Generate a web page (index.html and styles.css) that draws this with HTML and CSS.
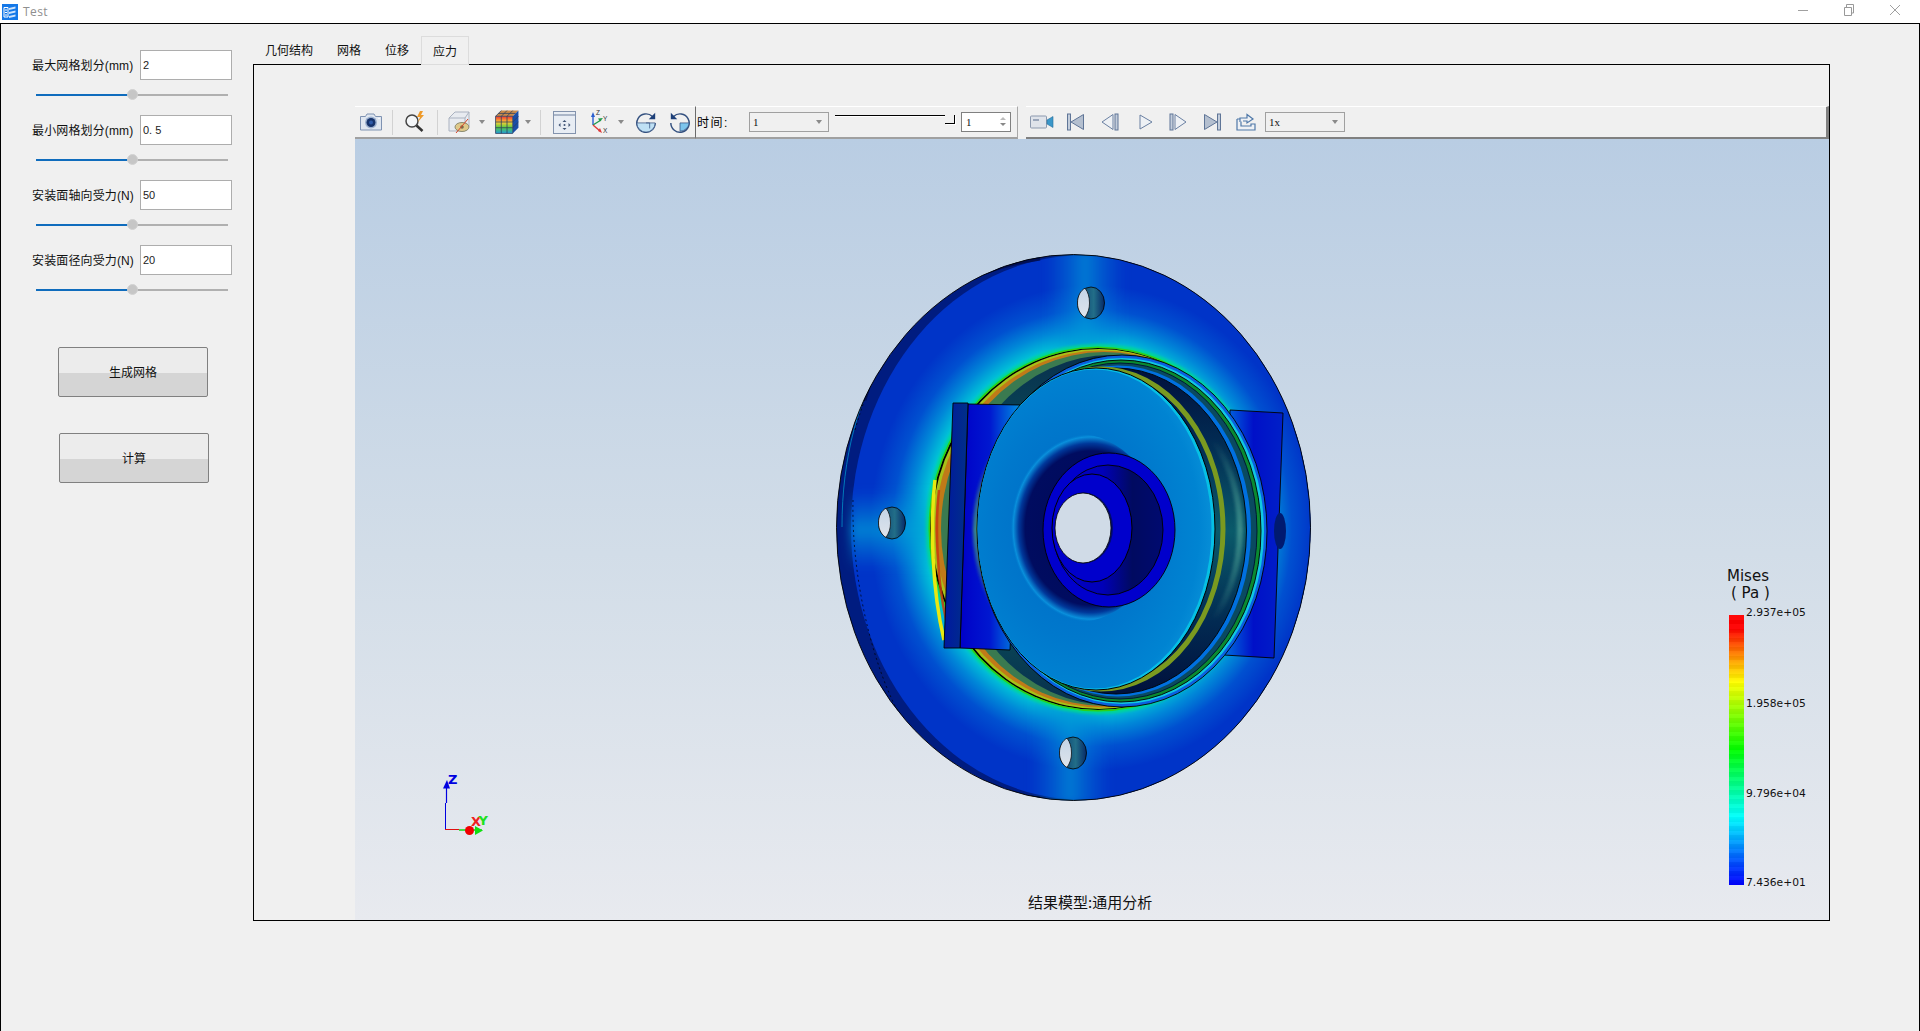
FILE: index.html
```html
<!DOCTYPE html>
<html lang="zh">
<head>
<meta charset="utf-8">
<title>Test</title>
<link rel="stylesheet" href="styles.css">
</head>
<body>
<svg width="0" height="0" class="defs">
  <defs>
    <linearGradient id="bg-hole" x1="0" y1="0" x2="0" y2="1"><stop offset="0" stop-color="#c4d4e6"/><stop offset="1" stop-color="#dfe5ec"/></linearGradient>
    <radialGradient id="disc" cx=".5" cy=".5" r=".5">
      <stop offset="0" stop-color="#00dcd4"/>
      <stop offset=".72" stop-color="#00dcd4"/>
      <stop offset=".76" stop-color="#00bcd8"/>
      <stop offset=".82" stop-color="#0088d8"/>
      <stop offset=".9" stop-color="#0050d0"/>
      <stop offset="1" stop-color="#0034c8"/>
    </radialGradient>
    <linearGradient id="spoke-v" x1="0" y1="0" x2="1" y2="0"><stop offset="0" stop-color="#0078d8" stop-opacity="0"/><stop offset=".5" stop-color="#0098d8" stop-opacity=".7"/><stop offset="1" stop-color="#0078d8" stop-opacity="0"/></linearGradient>
    <linearGradient id="spoke-h" x1="0" y1="0" x2="0" y2="1"><stop offset="0" stop-color="#0090d8" stop-opacity="0"/><stop offset=".5" stop-color="#00a0d8" stop-opacity=".7"/><stop offset="1" stop-color="#0090d8" stop-opacity="0"/></linearGradient>
    <linearGradient id="groove" x1="0" y1="0" x2="0" y2="1">
      <stop offset="0" stop-color="#08304e"/><stop offset=".25" stop-color="#0a4a58"/><stop offset=".75" stop-color="#0a4a58"/><stop offset="1" stop-color="#08304e"/>
    </linearGradient>
    <linearGradient id="groove-in" x1="0" y1="0" x2="0" y2="1">
      <stop offset="0" stop-color="#00103c"/><stop offset=".22" stop-color="#022a52"/><stop offset=".5" stop-color="#0a5a6a"/><stop offset=".78" stop-color="#022a52"/><stop offset="1" stop-color="#00103c"/>
    </linearGradient>
    <linearGradient id="mid-band" x1="0" y1="0" x2="0" y2="1">
      <stop offset=".2" stop-color="#3a8a88" stop-opacity="0"/><stop offset=".5" stop-color="#3a8a88"/><stop offset=".8" stop-color="#3a8a88" stop-opacity="0"/>
    </linearGradient>
    <radialGradient id="dish" cx=".42" cy=".5" r=".62">
      <stop offset="0" stop-color="#0068c4"/><stop offset=".55" stop-color="#0078cc"/><stop offset=".85" stop-color="#0084d2"/><stop offset="1" stop-color="#0a94da"/>
    </radialGradient>
    <radialGradient id="cup" cx=".58" cy=".5" r=".5">
      <stop offset="0" stop-color="#000858"/><stop offset=".82" stop-color="#000c60"/><stop offset=".9" stop-color="#00389a"/><stop offset=".97" stop-color="#0a90dc"/><stop offset="1" stop-color="#0080d0" stop-opacity="0"/>
    </radialGradient>
    <linearGradient id="boss-in" x1="0" y1="0" x2="1" y2="0"><stop offset="0" stop-color="#0000c8"/><stop offset=".45" stop-color="#0000b8"/><stop offset=".72" stop-color="#000a60"/><stop offset="1" stop-color="#000a70"/></linearGradient>
    <linearGradient id="plate-l" x1="0" y1="0" x2="1" y2="0"><stop offset="0" stop-color="#0000c8"/><stop offset=".5" stop-color="#0018d0"/><stop offset="1" stop-color="#0090e0"/></linearGradient>
    <linearGradient id="plate-r" x1="0" y1="0" x2="1" y2="0"><stop offset="0" stop-color="#0070e0"/><stop offset=".5" stop-color="#0010c8"/><stop offset="1" stop-color="#0020c8"/></linearGradient>
    <linearGradient id="strip" x1="0" y1="0" x2="1" y2="0"><stop offset="0" stop-color="#0018a0"/><stop offset="1" stop-color="#003088"/></linearGradient>
    <linearGradient id="hole-wall" x1="0" y1="0" x2="1" y2="0"><stop offset="0" stop-color="#083a70"/><stop offset=".6" stop-color="#226e88"/><stop offset="1" stop-color="#062a68"/></linearGradient>
    <filter id="soft" x="-30%" y="-30%" width="160%" height="160%"><feGaussianBlur stdDeviation="5"/></filter>
    <filter id="soft-s" x="-30%" y="-30%" width="160%" height="160%"><feGaussianBlur stdDeviation="1.4"/></filter>
    <clipPath id="disc-clip"><ellipse cx="1073.5" cy="527.5" rx="237" ry="273"/></clipPath>
    <clipPath id="groove-clip"><ellipse cx="1098" cy="529" rx="168" ry="181"/></clipPath>
    <g id="bolt">
      <ellipse cx="14" cy="16" rx="13.5" ry="16" fill="url(#hole-wall)" stroke="#000" stroke-width=".8"/>
      <path d="M8 1.200C3.500 3.500.5 9 .5 16s3.600 12.500 7.500 14.400C11 26 12.500 21.500 12.500 16 12.500 10 11 5 8 1.200Z" fill="url(#bg-hole)" stroke="#000" stroke-width=".7"/>
    </g>
    <linearGradient id="colorcube" x1="0" y1="0" x2="0" y2="1"><stop offset="0" stop-color="#e33"/><stop offset=".35" stop-color="#fc3"/><stop offset=".65" stop-color="#5c4"/><stop offset="1" stop-color="#29d"/></linearGradient>
  </defs>
</svg>

<header class="titlebar">
  <svg class="app-icon" viewBox="0 0 16 16"><rect width="16" height="16" fill="#1478e8"/><path d="M2 3.500h4v9.500H2zM3 6h2M3 8.500h2M3 11h2" fill="none" stroke="#fff" stroke-width="1"/><path d="M7 4l6.500-1.500v2L7 6zM7 8l6.500-1.500v2L7 10zM7 12l6.500-1.500v2L7 14z" fill="#cfe4fb"/></svg>
  <span class="app-title">Test</span>
  <div class="win-controls">
    <svg class="win-btn" viewBox="0 0 12 12"><path d="M1 6.500h10" stroke="#a0a0a0" fill="none"/></svg>
    <svg class="win-btn" viewBox="0 0 12 12"><path d="M1.500 3.500h7v8h-7zM3.500 3V.5h7V9H9" stroke="#999" fill="none"/></svg>
    <svg class="win-btn" viewBox="0 0 12 12"><path d="M1 1l10 10M11 1L1 11" stroke="#a0a0a0" fill="none"/></svg>
  </div>
</header>

<div class="window">
  <aside class="side">
    <div class="field">
      <div class="field-row"><label class="field-label">最大网格划分(mm)</label><input class="field-input" value="2"></div>
      <div class="slider"><div class="slider-fill"></div><div class="slider-knob"></div></div>
    </div>
    <div class="field">
      <div class="field-row"><label class="field-label">最小网格划分(mm)</label><input class="field-input" value="0. 5"></div>
      <div class="slider"><div class="slider-fill"></div><div class="slider-knob"></div></div>
    </div>
    <div class="field">
      <div class="field-row"><label class="field-label">安装面轴向受力(N)</label><input class="field-input" value="50"></div>
      <div class="slider"><div class="slider-fill"></div><div class="slider-knob"></div></div>
    </div>
    <div class="field">
      <div class="field-row"><label class="field-label">安装面径向受力(N)</label><input class="field-input" value="20"></div>
      <div class="slider"><div class="slider-fill"></div><div class="slider-knob"></div></div>
    </div>
    <button class="action action-mesh">生成网格</button>
    <button class="action action-calc">计算</button>
  </aside>

  <main class="content">
    <nav class="tabs">
      <div class="tab">几何结构</div>
      <div class="tab">网格</div>
      <div class="tab">位移</div>
      <div class="tab tab-active">应力</div>
    </nav>
    <section class="panel">
      <div class="toolbar">
        <div class="tool-group tool-group-a">
          <svg class="ic ic-camera" viewBox="0 0 24 20"><path d="M1.500 4.500h5l1.500-2.500h7l1.500 2.500h6v13.500h-21z" fill="#dfe6f0" stroke="#7f93b2" stroke-width="1"/><circle cx="12" cy="10.500" r="6" fill="#9db1cf"/><circle cx="12" cy="10.500" r="4.500" fill="#16336b"/><circle cx="12" cy="10.500" r="2" fill="#2e5aa8"/><circle cx="20" cy="6.500" r=".8" fill="#fff"/></svg>
          <i class="sep sep-a"></i>
          <svg class="ic ic-search" viewBox="0 0 24 24"><circle cx="9" cy="11" r="6" fill="#f4f6f8" stroke="#444" stroke-width="1.500"/><path d="M13.500 15.500l6 5.500" stroke="#333" stroke-width="2.500" fill="none"/><path d="M17 1l-3 6h3l-2 5 6-7h-3l2-4z" fill="#ee9a2a"/></svg>
          <i class="sep sep-b"></i>
          <svg class="ic ic-cube" viewBox="0 0 24 24"><path d="M2 8l6-6h14v14l-4 5H2z" fill="#e8ebf0" stroke="#aab2c0"/><path d="M2 8h16v13M18 8l4-6" fill="none" stroke="#aab2c0"/><ellipse cx="15" cy="17" rx="7" ry="4.500" fill="#dfc98a" stroke="#8a8a70"/><circle cx="15" cy="17" r="1.800" fill="#776c4c"/><path d="M9 23L21 9" stroke="#d8442a" stroke-width="1"/></svg>
          <i class="caret caret-cube"></i>
          <svg class="ic ic-color" viewBox="1.500 1.500 21 21"><path d="M2 7l5-5h15l-5 5z" fill="#c98a4a"/><path d="M17 7l5-5v15l-5 5z" fill="#1a4ea8"/><rect x="2" y="7" width="15" height="15" fill="url(#colorcube)"/><path d="M2 7h15v15H2zM7 7v15M12 7v15M2 12h15M2 17h15M7 2L2 7M12 2L7 7M17 2l-5 5M22 7l-5 5M22 12l-5 5M4.500 4.500h15" fill="none" stroke="#30415e" stroke-width=".7"/></svg>
          <i class="caret caret-color"></i>
          <i class="sep sep-c"></i>
          <svg class="ic ic-fit" viewBox="0 0 23 23"><rect x=".5" y=".5" width="22" height="22" fill="#e8edf4" stroke="#8393ad"/><path d="M1 4h21" stroke="#6c7e9c"/><path d="M11.500 9l-2 2h4zM11.500 19l-2-2h4zM5.500 14l2-2v4zM17.500 14l-2-2v4z" fill="#3e5273"/><circle cx="11.500" cy="14" r="1" fill="#3e5273"/></svg>
          <svg class="ic ic-axes" viewBox="0 0 24 24"><path d="M5 15V6" stroke="#2a5ed0" stroke-width="1.400"/><path d="M5 2L3 7h4z" fill="#2a5ed0"/><path d="M5 15l8-5" stroke="#1f9a4a" stroke-width="1.400"/><path d="M15 8l-5 .5 2 3z" fill="#1f9a4a"/><path d="M5 15l7 6" stroke="#e03a3a" stroke-width="1.400"/><path d="M14 23l-2-5-2 3z" fill="#e03a3a"/><text class="axis-l" x="8" y="5">Z</text><text class="axis-l" x="15" y="11">Y</text><text class="axis-l" x="15" y="23">X</text></svg>
          <i class="caret caret-axes"></i>
          <svg class="ic ic-rot ic-rot-r" viewBox="0 0 24 24"><path d="M19 6A10 10 0 1 0 22 13" fill="none" stroke="#33507f" stroke-width="1.600"/><path d="M2 13h20A10 10 0 0 1 2 13z" fill="#bfe0f4" stroke="#33507f" stroke-width=".8"/><path d="M12 13v6M12 13h-4" fill="none" stroke="#33507f" stroke-width=".8" transform="translate(4 0)"/><path d="M22 2v7h-7z" fill="#1d3f78"/></svg>
          <svg class="ic ic-rot ic-rot-l" viewBox="0 0 24 24"><path d="M5 6A10 10 0 1 1 2 13" fill="none" stroke="#33507f" stroke-width="1.600"/><path d="M22 13H12v9A10 10 0 0 0 22 13z" fill="#7cc4ec" stroke="#33507f" stroke-width=".8"/><path d="M2 2v7h7z" fill="#1d3f78"/></svg>
        </div>
        <div class="tool-group tool-group-b">
          <span class="time-label">时间:</span>
          <div class="combo combo-time">1<i class="caret caret-in"></i></div>
          <div class="time-slider"><i class="time-line"></i><i class="time-end"></i></div>
          <div class="spin">1<span class="spin-arrows"><i class="spin-up"></i><i class="spin-down"></i></span></div>
        </div>
        <div class="tool-group tool-group-c">
          <svg class="ic ic-video" viewBox="0 0 24 14"><rect x=".5" y="1" width="16" height="12" rx="1" fill="#dfe3ea" stroke="#8c99ae"/><rect x="3" y="4" width="6" height="2" fill="#9aa6ba"/><path d="M17 5l6-3.500v11L17 9z" fill="#3b97c9" stroke="#2a6f9c" stroke-width=".6"/></svg>
          <svg class="ic ic-play ic-first" viewBox="0 0 18 18"><rect x=".5" y="1" width="3" height="16" fill="#c3cddb" stroke="#5f7597"/><path d="M16.500 1.500v15L4 9z" fill="#b4bfcf" stroke="#5f7597"/></svg>
          <svg class="ic ic-play ic-prev" viewBox="0 0 18 18"><path d="M12 1.500v15L1 9z" fill="#eef1f5" stroke="#6a80a2"/><rect x="14" y="1" width="3" height="16" fill="#c3cddb" stroke="#5f7597"/></svg>
          <svg class="ic ic-play ic-next-play" viewBox="0 0 14 16"><path d="M1 1v14l12-7z" fill="#eef1f5" stroke="#6a80a2"/></svg>
          <svg class="ic ic-play ic-next" viewBox="0 0 18 18"><rect x="1" y="1" width="3" height="16" fill="#c3cddb" stroke="#5f7597"/><path d="M6 1.500v15L17 9z" fill="#eef1f5" stroke="#6a80a2"/></svg>
          <svg class="ic ic-play ic-last" viewBox="0 0 18 18"><path d="M1.500 1.500v15L14 9z" fill="#b4bfcf" stroke="#5f7597"/><rect x="14.500" y="1" width="3" height="16" fill="#c3cddb" stroke="#5f7597"/></svg>
          <svg class="ic ic-export" viewBox="0 0 20 18"><path d="M1 6h5M1 6v11h18v-6h-4v2H5V6" fill="#eef1f5" stroke="#4f78a8" stroke-width="1.200"/><path d="M4 9V5h7V1.500L17 6l-6 4V8H7" fill="#eef1f5" stroke="#4f78a8" stroke-width="1.200"/></svg>
          <div class="combo combo-speed">1x<i class="caret caret-in"></i></div>
        </div>
      </div>

      <div class="viewport">
        <svg class="scene" viewBox="355 139 1474 781">
          <ellipse cx="1073.500" cy="527.500" rx="237" ry="273" fill="#001c80"/>
          <g clip-path="url(#disc-clip)">
            <ellipse cx="1081" cy="527.500" rx="230" ry="272" fill="#0034c8"/>
            <path d="M842 527C842 390 905 275 1040 257" fill="none" stroke="#0090c8" stroke-width=".8"/>
            <ellipse cx="1092" cy="528" rx="222" ry="243" fill="url(#disc)"/>
            <rect x="1045" y="250" width="80" height="130" fill="url(#spoke-v)" filter="url(#soft)"/>
            <rect x="1030" y="680" width="80" height="125" fill="url(#spoke-v)" filter="url(#soft)"/>
            <rect x="850" y="490" width="95" height="80" fill="url(#spoke-h)" filter="url(#soft)"/>
            <path d="M853 500C851 590 880 700 920 745" fill="none" stroke="#000" stroke-width=".7" stroke-dasharray="2 3"/>
            <path d="M855 430C875 360 900 320 940 285" fill="none" stroke="#000" stroke-width=".7" stroke-dasharray="2 3"/>
            <path d="M870 690C905 755 970 790 1040 798" fill="none" stroke="#00101c" stroke-width="2.500" opacity=".8"/>
            <path d="M864 400C880 340 930 275 1040 258" fill="none" stroke="#000e50" stroke-width="5" opacity=".9"/>
          </g>
          <!-- outer stressed ring -->
          <ellipse cx="1098" cy="529" rx="172" ry="185" fill="#00d890" filter="url(#soft-s)"/>
          <ellipse cx="1098" cy="529" rx="169.500" ry="182.500" fill="#2fd018"/>
          <g clip-path="url(#groove-clip)">
            <ellipse cx="1098" cy="529" rx="168" ry="181" fill="#000"/>
            <ellipse cx="1099" cy="529" rx="167" ry="180" fill="#a8c018"/>
            <ellipse cx="1101" cy="529" rx="166" ry="178.500" fill="#c07a18"/>
            <ellipse cx="1104" cy="529" rx="163" ry="177" fill="#3a7a50"/>
            <ellipse cx="1111" cy="530" rx="158" ry="175" fill="url(#groove)"/>
          </g>
          <path d="M935 480C930 525 932 590 944 640" fill="none" stroke="#e8e810" stroke-width="3.500"/>
          <path d="M939 490C935 525 937 580 946 620" fill="none" stroke="#c83a10" stroke-width="2.500" opacity=".85"/>
          <!-- plates -->
          <path d="M1230 410L1283 413 1274 658 1224 655Z" fill="url(#plate-r)" stroke="#000" stroke-width=".9"/>
          <ellipse cx="1280" cy="531" rx="6" ry="18" fill="#001a70"/>
          <path d="M968 404L1020 405 1010 650 960 648Z" fill="url(#plate-l)" stroke="#000" stroke-width=".9"/>
          <path d="M953 403L968 403 960 648 944 648Z" fill="url(#strip)" stroke="#000" stroke-width=".9"/>
          <!-- rim -->
          <ellipse cx="1122" cy="531" rx="145" ry="176" fill="#0a60e0" stroke="#000" stroke-width=".9"/>
          <ellipse cx="1122" cy="531" rx="142" ry="173" fill="#10c8e0"/>
          <ellipse cx="1121" cy="531" rx="140" ry="171" fill="#0a8a30" stroke="#000" stroke-width=".9"/>
          <ellipse cx="1120" cy="531" rx="137" ry="168" fill="#0a4a60" stroke="#001030" stroke-width=".9"/>
          <ellipse cx="1118" cy="531" rx="133" ry="165.500" fill="#0070e0"/>
          <ellipse cx="1116" cy="531" rx="130.500" ry="163" fill="url(#groove-in)" stroke="#000" stroke-width=".9"/>
          <ellipse cx="1108" cy="530" rx="132" ry="150" fill="none" stroke="url(#mid-band)" stroke-width="6" filter="url(#soft-s)"/>
          <ellipse cx="1101" cy="529" rx="122" ry="160" fill="none" stroke="#7a9a20" stroke-width="5"/>
          <!-- dish -->
          <ellipse cx="1096" cy="529" rx="119" ry="161" fill="#06c0e4" stroke="#000" stroke-width="1"/>
          <ellipse cx="1094.500" cy="529" rx="117" ry="159.500" fill="url(#dish)"/>
          <ellipse cx="1078" cy="528" rx="80" ry="94" fill="url(#cup)"/>
          <!-- boss -->
          <ellipse cx="1109" cy="530" rx="66" ry="77" fill="#0000cc" stroke="#000" stroke-width=".9"/>
          <ellipse cx="1108" cy="530" rx="55" ry="65" fill="url(#boss-in)" stroke="#000" stroke-width=".9"/>
          <ellipse cx="1092" cy="528" rx="40" ry="54" fill="#0000cc" stroke="#000" stroke-width="1"/>
          <ellipse cx="1084" cy="528" rx="29" ry="35.500" fill="#000a70"/>
          <ellipse cx="1083" cy="528" rx="28" ry="35" fill="#d0dbe7" stroke="#000" stroke-width=".8"/>
          <!-- bolt holes -->
          <use href="#bolt" x="1077" y="287"/>
          <use href="#bolt" x="878" y="507"/>
          <use href="#bolt" x="1059" y="737"/>
          <ellipse cx="1073.500" cy="527.500" rx="237" ry="273" fill="none" stroke="#000" stroke-width=".9"/>
          <!-- triad -->
          <path d="M445.500 803V829.500H459" fill="none" stroke="#0000e0" stroke-width="1"/>
          <path d="M446.500 788V803" fill="none" stroke="#0000e0" stroke-width="1.200"/>
          <path d="M447 780l-4 8.500h7z" fill="#0000e0"/>
          <path d="M445 829.500h14" stroke="#e01010"/>
          <path d="M459 830h23" stroke="#10d810" stroke-width="1.500"/>
          <circle cx="469.500" cy="830.500" r="4.500" fill="#f00000"/>
          <path d="M475 826l8 4.500-8 4.500z" fill="#10e010"/>
          <text class="tri tri-z" x="448" y="784">Z</text>
          <text class="tri tri-x" x="471" y="826">X</text>
          <text class="tri tri-y" x="478.500" y="825">Y</text>
        </svg>

        <div class="legend">
          <div class="legend-title">Mises<br><span class="legend-unit">( Pa )</span></div>
          <div class="legend-body">
            <div class="legend-bar"></div>
            <div class="legend-ticks">
              <span>2.937e+05</span><span>1.958e+05</span><span>9.796e+04</span><span>7.436e+01</span>
            </div>
          </div>
        </div>
        <div class="caption">结果模型:通用分析</div>
      </div>
    </section>
  </main>
</div>
</body>
</html>
```
FILE: styles.css
```css
* { box-sizing: border-box; }
html, body { margin: 0; height: 100%; }
body {
  display: flex; flex-direction: column; height: 1031px; overflow: hidden;
  background: #f0f0f0; color: #111;
  font: 12px "Liberation Sans", "Noto Sans CJK SC", sans-serif;
}
.defs { position: absolute; }

.titlebar { height: 23px; flex: none; background: #fff; display: flex; align-items: center; padding-left: 2px; }
.app-icon { width: 16px; height: 16px; flex: none; }
.app-title { margin-left: 5px; color: #8f8f8f; font: 12px "Open Sans", sans-serif; letter-spacing: .4px; }
.win-controls { margin-left: auto; display: flex; gap: 34px; padding: 0 19px 3px 0; }
.win-btn { width: 12px; height: 12px; display: block; }

.window { flex: 1; display: flex; border: 1px solid #000; border-bottom: 0; background: #f0f0f0; }
.side { width: 252px; flex: none; padding: 26px 0 0 31px; display: flex; flex-direction: column; }
.field { height: 65px; }
.field-row { display: flex; align-items: center; height: 30px; }
.field-label { width: 108px; white-space: nowrap; font-size: 12px; letter-spacing: .13px; padding-bottom: 2px; }
.field-input {
  width: 92px; height: 30px; padding: 0 2px; border: 1px solid #adadad; border-radius: 0;
  background: #fff; color: #222; font: 11px "Liberation Sans", sans-serif; outline: 0;
}
.slider { position: relative; width: 192px; height: 2px; margin: 14px 0 0 4px; background: #b0b0b0; }
.slider-fill { width: 96px; height: 2px; background: #0f6cbd; }
.slider-knob {
  position: absolute; left: 91px; top: -5px; width: 11px; height: 11px; border-radius: 50%;
  background: #c6c6c6; border: 1px solid #d2d2d2;
}
.action {
  display: block; width: 150px; height: 50px; padding: 0 0 2px; border: 1px solid #808080; border-radius: 2px;
  background: linear-gradient(#ececec 0 52%, #d5d5d5 52% 100%); color: #111;
  font: 12px "Liberation Sans", "Noto Sans CJK SC", sans-serif;
}
.action-mesh { margin: 37px 0 0 26px; }
.action-calc { margin: 36px 0 0 27px; }

.content { flex: 1; min-width: 0; padding: 12px 89px 110px 0; display: flex; flex-direction: column; }
.tabs { display: flex; height: 29px; flex: none; position: relative; z-index: 1; margin-bottom: -1px; }
.tab { padding: 3px 12px 0; height: 29px; line-height: 24px; }
.tab-active { background: #f0f0f0; border: 1px solid #dcdcdc; padding: 3px 11px 0; }
.panel { flex: 1; min-height: 0; border: 1px solid #000; padding: 41px 0 0 101px; display: flex; flex-direction: column; }

.toolbar { height: 33px; flex: none; display: flex; background: #f0f0f0; }
.tool-group { display: flex; align-items: center; height: 33px; border-top: 1px solid #fff; border-bottom: 2px solid #a0a0a0; }
.tool-group-a { width: 341px; border-right: 1px solid #6b6b6b; }
.tool-group-b { width: 322px; padding-left: 1px; border-right: 1px solid #a8a8a8; }
.tool-group-c { flex: 1; margin-left: 8px; border-bottom-color: #808080; border-right: 3px solid #808080; }

.ic { display: block; flex: none; }
.ic-camera { width: 24px; height: 20px; margin-left: 4px; }
.sep { display: block; width: 1px; height: 25px; background: #d2d2d2; flex: none; }
.sep-a { margin-left: 9px; }
.ic-search { width: 24px; height: 24px; margin-left: 10px; }
.sep-b { margin-left: 10px; }
.ic-cube { width: 24px; height: 24px; margin-left: 9px; }
.caret { display: block; width: 0; height: 0; border: 3.500px solid transparent; border-top: 4px solid #8a8a8a; border-bottom: 0; flex: none; }
.caret-cube { margin-left: 8px; }
.ic-color { width: 24px; height: 24px; margin-left: 10px; }
.caret-color { margin-left: 6px; }
.sep-c { margin-left: 9px; }
.ic-fit { width: 23px; height: 23px; margin-left: 12px; }
.ic-axes { width: 24px; height: 24px; margin-left: 12px; }
.axis-l { font: 6.500px "Liberation Sans", sans-serif; fill: #333; }
.caret-axes { margin-left: 6px; }
.ic-rot { width: 22px; height: 22px; }
.ic-rot-r { margin-left: 11px; }
.ic-rot-l { margin-left: 12px; }

.time-label { width: 52px; font-size: 12px; color: #000; letter-spacing: 1.500px; padding-bottom: 1px; }
.combo { position: relative; height: 20px; border: 1px solid #a0a0a0; background: #f0f0f0; font: 11px "Liberation Serif", serif; line-height: 18px; padding-left: 3px; flex: none; }
.combo-time { width: 80px; }
.combo-speed { width: 80px; margin-left: 9px; }
.caret-in { position: absolute; right: 6px; top: 7px; }
.time-slider { position: relative; width: 120px; height: 16px; margin-left: 6px; flex: none; }
.time-line { position: absolute; left: 0; top: 1px; width: 110px; height: 1px; background: #000; box-shadow: 0 1px 0 #fff; }
.time-end { position: absolute; left: 110px; top: 1px; width: 10px; height: 9px; border-right: 1px solid #000; border-bottom: 1px solid #000; box-shadow: 1px 1px 0 #fff; }
.spin { position: relative; width: 50px; height: 20px; margin-left: 6px; border: 1px solid #808080; background: #fff; font: 11px "Liberation Serif", serif; line-height: 18px; padding-left: 4px; flex: none; }
.spin-arrows { position: absolute; right: 4px; top: 4px; display: flex; flex-direction: column; gap: 3px; }
.spin-up { display: block; border: 3px solid transparent; border-bottom: 3px solid #bbb; border-top: 0; width: 0; }
.spin-down { display: block; border: 3px solid transparent; border-top: 3px solid #888; border-bottom: 0; width: 0; }

.ic-video { width: 24px; height: 14px; margin-left: 4px; }
.ic-play { width: 18px; height: 18px; }
.ic-first { margin-left: 13px; }
.ic-prev { margin-left: 16px; }
.ic-next-play { width: 14px; height: 16px; margin-left: 20px; }
.ic-next { margin-left: 16px; }
.ic-last { margin-left: 16px; }
.ic-export { width: 20px; height: 18px; margin-left: 15px; }

.viewport {
  position: relative; flex: 1; min-height: 0; overflow: hidden;
  background: linear-gradient(#b9cde3, #d2dde8 53%, #e8eaef);
}
.scene { position: absolute; inset: 0; width: 100%; height: 100%; display: block; }
.tri { font: bold 13px "DejaVu Sans", sans-serif; }
.tri-z { fill: #0000e0; }
.tri-x { fill: #f02020; }
.tri-y { fill: #20e020; }

.legend { position: absolute; left: 1372px; top: 429px; width: 100px; color: #111; font-family: "DejaVu Sans", sans-serif; }
.legend-title { font-size: 15px; line-height: 17px; }
.legend-unit { margin-left: 4px; }
.legend-body { display: flex; margin-top: 13px; }
.legend-bar {
  width: 15px; height: 270px; margin-left: 2px; flex: none;
  background:
    repeating-linear-gradient(rgba(255,255,255,.035) 0 4.500px, rgba(0,0,0,.035) 4.500px 9px),
    linear-gradient(#f00 0 5%, #ff6000 12%, #ffb000 18%, #ff0 25%, #0f0 50%, #00ffc0 68%, #0ff 75%, #00a0ff 84%, #0040ff 93%, #00f 100%);
}
.legend-ticks { position: relative; flex: 1; }
.legend-ticks span { position: absolute; left: 2px; font-size: 10.700px; line-height: 12px; white-space: nowrap; }
.legend-ticks span:nth-child(1) { top: -8px; }
.legend-ticks span:nth-child(2) { top: 83px; }
.legend-ticks span:nth-child(3) { top: 173px; }
.legend-ticks span:nth-child(4) { top: 262px; }
.caption { position: absolute; left: 673px; top: 752px; font: 15px "Noto Sans CJK SC", sans-serif; color: #111; white-space: nowrap; }
```
